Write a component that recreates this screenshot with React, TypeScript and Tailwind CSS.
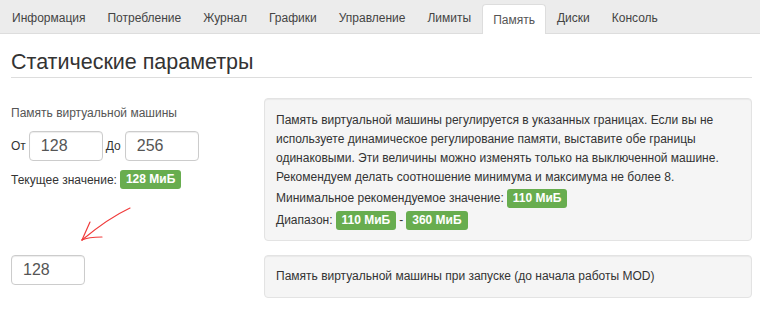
const TABS = ["Информация", "Потребление", "Журнал", "Графики", "Управление", "Лимиты", "Память", "Диски", "Консоль"];
const ACTIVE = "Память";

function Badge({ children }: { children: React.ReactNode }) {
  return (
    <span className="inline-block rounded-[3px] bg-[#68ad4f] px-[6px] text-[12px] font-bold leading-[19px] text-white">
      {children}
    </span>
  );
}

function NumInput({ value }: { value: string }) {
  return (
    <div className="flex h-[30px] w-[74px] items-center rounded-[4px] border border-[#ccc] bg-white px-[11px] text-[16px] text-[#555] shadow-[inset_0_1px_1px_rgba(0,0,0,0.075)]">
      {value}
    </div>
  );
}

export default function App() {
  return (
    <div className="h-[310px] w-[760px] overflow-hidden bg-white font-['Liberation_Sans',Arial,sans-serif] text-[#333]">
      {/* Tabs */}
      <div className="flex h-[34px] items-end border-b border-[#ddd] bg-[#ececec] pl-[1px]">
        {TABS.map((t) =>
          t === ACTIVE ? (
            <div
              key={t}
              className="-mb-px flex h-[30px] items-center rounded-t-[4px] border border-b-0 border-[#ddd] bg-white px-[10px] text-[12px] text-[#555]"
            >
              {t}
            </div>
          ) : (
            <div key={t} className="flex h-[30px] items-center px-[11px] text-[12px] text-[#444]">
              {t}
            </div>
          )
        )}
      </div>

      <div className="pl-[11px] pr-[8px]">
        <h1 className="mt-[15px] border-b border-[#ddd] pb-[2px] text-[21.5px] leading-[26px] text-[#333]">
          Статические параметры
        </h1>

        <div className="mt-[20px] grid grid-cols-[253px_1fr] gap-y-[14px]">
          {/* Left column, row 1 */}
          <div className="relative pt-[7px]">
            <div className="text-[12px] leading-[16px] text-[#555]">Память виртуальной машины</div>
            <div className="mt-[10px] flex items-center text-[12px]">
              <span className="mr-[3px]">От</span>
              <NumInput value="128" />
              <span className="ml-[3px] mr-[4px]">До</span>
              <NumInput value="256" />
            </div>
            <div className="mt-[9px] flex items-center gap-[3px] text-[12px]">
              <span>Текущее значение:</span>
              <Badge>128 МиБ</Badge>
            </div>
            <svg className="absolute left-[49px] top-[105px]" width="80" height="50" viewBox="0 0 80 50" fill="none">
              <path d="M70 5 C55 12 40 22 22 37" stroke="#f03b3b" strokeWidth="1.2" strokeLinecap="round" />
              <path d="M22 37 L30 19" stroke="#f03b3b" strokeWidth="1.2" strokeLinecap="round" />
              <path d="M22 37 C28 34 35 34 42 34" stroke="#f03b3b" strokeWidth="1.2" strokeLinecap="round" />
            </svg>
          </div>

          {/* Right column, row 1 */}
          <div className="rounded-[4px] border border-[#e3e3e3] bg-[#f5f5f5] px-[11px] pb-[10px] pt-[12px] text-[12px] leading-[19px] shadow-[inset_0_1px_1px_rgba(0,0,0,0.05)]">
            <p>
              Память виртуальной машины регулируется в указанных границах. Если вы не используете динамическое
              регулирование памяти, выставите обе границы одинаковыми. Эти величины можно изменять только на
              выключенной машине. Рекомендуем делать соотношение минимума и максимума не более 8.
            </p>
            <div className="mt-[2px] flex items-center gap-[3px]">
              <span>Минимальное рекомендуемое значение:</span>
              <Badge>110 МиБ</Badge>
            </div>
            <div className="mt-[3px] flex items-center gap-[3px]">
              <span>Диапазон:</span>
              <Badge>110 МиБ</Badge>
              <span>-</span>
              <Badge>360 МиБ</Badge>
            </div>
          </div>

          {/* Row 2 */}
          <div>
            <NumInput value="128" />
          </div>
          <div className="rounded-[4px] border border-[#e3e3e3] bg-[#f5f5f5] px-[11px] py-[11px] text-[12px] leading-[19px] shadow-[inset_0_1px_1px_rgba(0,0,0,0.05)]">
            Память виртуальной машины при запуске (до начала работы MOD)
          </div>
        </div>
      </div>
    </div>
  );
}
